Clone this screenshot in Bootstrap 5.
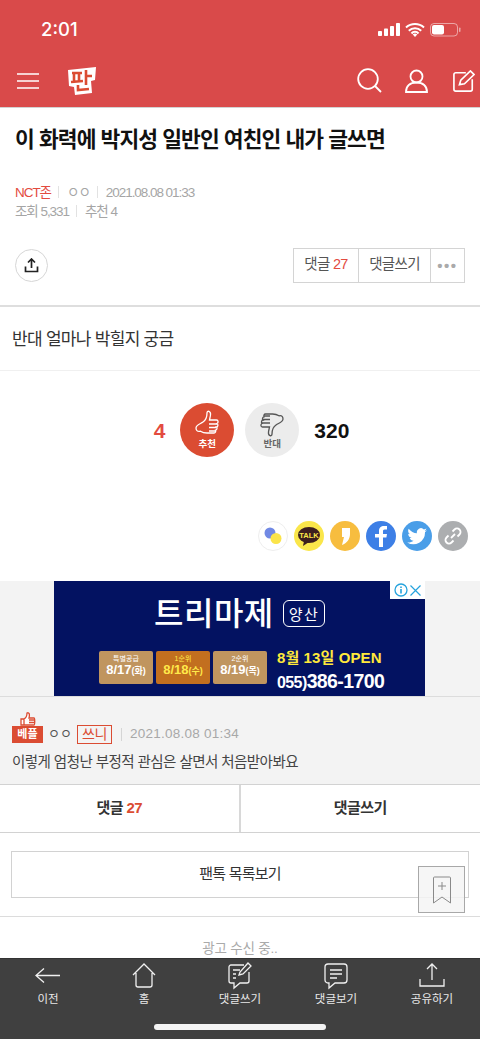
<!doctype html>
<html lang="ko"><head><meta charset="utf-8"><meta name="viewport" content="width=device-width,initial-scale=1">
<link rel="stylesheet" href="https://cdn.jsdelivr.net/npm/bootstrap@5.3.0/dist/css/bootstrap.min.css">
<style>
html,body{height:1039px;overflow:hidden}
body{font-family:"Liberation Sans","Noto Sans CJK KR",sans-serif;background:#fff;color:#222;position:relative;width:480px}
.topbar{background:#d94a4a;height:107px;border-bottom:0;color:#fff}
.statusrow{height:59px;padding:0 18px 0 41px}
.clock{font-size:18.5px;font-family:Inter,"Liberation Sans",sans-serif;font-weight:500;line-height:1;margin-top:-1px}
.navrow{height:48px;padding:0 5px 5px 17px}
.sep{height:1px;background:#d2d2d2}
.ttl{font-size:21.5px;font-weight:700;letter-spacing:-.92px;line-height:30px;margin:0;padding:17px 15px 0;color:#111;white-space:nowrap}
.meta{font-size:13.5px;letter-spacing:-1.05px;color:#a5a5a5;padding:0 15px;line-height:19px;white-space:nowrap}
.meta1{margin-top:28px}
.meta .tick{display:inline-block;width:1px;height:12px;background:#e2e2e2;margin:0 8px 0 7px;vertical-align:-1px}
.redt{color:#e34b3f}
.actrow{padding:0 15px;margin-top:27px;height:34px}
.upcirc{width:33px;height:33px;border:1px solid #d6d6d6;border-radius:50%}
.btngrp{border:1px solid #d4d4d4;height:35px;font-size:14.5px;letter-spacing:-.7px;color:#555}
.btngrp>div{border-right:1px solid #d4d4d4;height:100%}
.btngrp>div:last-child{border-right:0}
.g1{width:65px}.g2{width:72px}.g3{width:33px}
.dots{color:#aaa;letter-spacing:1.5px;font-size:15px;font-weight:700;padding-top:3px}
.bodytxt{font-size:17px;letter-spacing:-.7px;color:#333;padding:21px 12px 0;line-height:24px;height:66px;border-top:2px solid #dedede;margin-top:23px;border-bottom:1px solid #f0f0f0}
.votes{margin-top:31px;height:55px;padding-left:23px}
.vn{font-size:21px;font-weight:700;margin-top:3px}
.vcirc{width:54px;height:54px;border-radius:50%;font-size:9.5px;font-weight:700;line-height:1}
.up{background:#db4c32;color:#fff}.dn{background:#ececec;color:#666}
.sharerow{margin-top:64px;height:30px;padding-right:12px;gap:6px}
.sc{width:30px;height:30px;border-radius:50%}
.grayband{background:#f3f3f3;margin-top:30px;height:204px;border-bottom:1px solid #d2d2d2}
.adbox{width:371px;height:115px;background:#031261;margin-left:54px;position:relative;color:#fff;overflow:hidden}
.adx{position:absolute;right:0;top:0;width:35px;height:18px;background:#fff}
.adtitle{font-size:32px;font-weight:500;letter-spacing:.5px;line-height:40px;padding-top:10px;padding-left:100px;white-space:nowrap;font-family:"Noto Sans CJK KR",sans-serif}
.adtag{font-size:15px;border:1px solid #fff;border-radius:6px;padding:2px 5px;line-height:16px;letter-spacing:1.500px;font-weight:400;margin-left:9px;vertical-align:5px}
.adrow{position:absolute;left:45px;top:70px;gap:3px}
.adb{width:54px;height:33px;background:#c0955f;border-radius:2px;font-size:13px;font-weight:700;line-height:13px}
.adb small{display:block;font-size:7px;line-height:9px;padding-top:3px;font-weight:400}
.adb.hot{background:#c26f1f;color:#ffe94a}
.adright{position:absolute;left:223px;top:69px;white-space:nowrap}
.adr1{color:#ffe93b;font-size:15px;font-weight:700;line-height:16px;letter-spacing:.1px}
.adr2{font-size:19.500px;font-weight:700;line-height:22px;margin-top:4px;letter-spacing:-.6px}
.adr2 span{font-size:16px}
.cmt{padding:28px 12px 0;height:88px;border-top:1px solid #dcdcdc}
.beple{background:#db4c32;color:#fff;font-size:11px;font-weight:700;width:31px;height:17px;line-height:17px;position:relative;text-align:center}
.thumbmini{position:absolute;left:8px;top:-14px}
.cmeta{font-size:13.5px;color:#a8a8a8;height:18px;letter-spacing:.25px}
.who{color:#555;font-size:13px;margin:0 5px;letter-spacing:0}
.ssni{border:1px solid #db4c32;color:#db4c32;font-size:14px;width:35px;height:19px;line-height:17px;text-align:center;margin-right:9px;letter-spacing:-.5px}
.cticks{width:1px;height:13px;background:#d5d5d5;margin-right:8px}
.ctext{font-size:14.5px;letter-spacing:-.55px;color:#444;line-height:22px;margin-top:8px;white-space:nowrap}
.twobtn{height:48px;border-bottom:1px solid #d2d2d2;font-size:15px;font-weight:700;letter-spacing:-.6px;color:#333}
.twobtn>div{width:50%}
.twobtn>div:first-child{border-right:2px solid #d8d8d8;width:241px}
.listbtn{margin:18px 11px 0;height:47px;border:1px solid #d2d2d2;font-size:15px;letter-spacing:-.8px;color:#333}
.hr2{height:1px;background:#dcdcdc;margin-top:18px}
.adwait{font-size:13.5px;color:#aaa;text-align:center;line-height:18px;margin-top:23px;letter-spacing:-.2px}
.floatbm{position:absolute;left:418px;top:866px;width:47px;height:47px;background:rgba(245,245,245,.85);border:1px solid #a8a8a8}
.dock{position:absolute;left:0;right:0;top:958px;height:81px;background:#404040;color:#e8e8e8;font-size:11.5px;border-top:1px solid #333}
.dockit{width:96px;height:49px;padding-top:2px}
.dockit svg{height:29px;display:block}
.dockit span{line-height:13px;margin-top:3px}
.homebar{position:absolute;left:154px;top:65px;width:172px;height:6px;background:#f4f4f4;border-radius:3px}
</style></head><body>

<header class="topbar">
 <div class="statusrow d-flex align-items-center justify-content-between">
  <span class="clock">2:01</span>
  <svg width="84" height="16" viewBox="0 0 84 16" fill="#fff">
   <rect x="0" y="9" width="4" height="5" rx=".8"/><rect x="6" y="6.500" width="4" height="7.500" rx=".8"/><rect x="12" y="4" width="4" height="10" rx=".8"/><rect x="18" y="1" width="4" height="13" rx=".8"/>
   <path d="M28 5.500a13.500 13.500 0 0 1 18 0M30.800 8.700a9 9 0 0 1 12.400 0M33.500 11.500a4.500 4.500 0 0 1 7 0" fill="none" stroke="#fff" stroke-width="2"/><path d="M37 15l-2.300-2.400a3.200 3.200 0 0 1 4.600 0z"/>
   <rect x="52.500" y="1.500" width="27" height="12.500" rx="3.500" fill="none" stroke="#fff" stroke-opacity=".5"/><rect x="54" y="3" width="12" height="9.500" rx="2"/><rect x="81" y="5.500" width="1.500" height="4.500" rx=".7" fill-opacity=".5"/>
  </svg>
 </div>
 <div class="navrow d-flex align-items-center">
  <svg width="23" height="16" viewBox="0 0 23 16" stroke="#fff" stroke-width="1.700"><path d="M0 1h22M0 8h22M0 15h22"/></svg>
  <svg class="logo-p" style="margin-left:27px" width="31" height="30" viewBox="0 0 31 30"><path d="M1 4L29 1l-1 13-4 1 1 12-17 2-1-8-5-1z" fill="#fff"/><path d="M5 7h10M7 7v8M12 7v8M4 16l12-1M19 4v15M19 10h6M11 19v5l11-1" stroke="#db4c32" stroke-width="2.600" fill="none"/></svg>
  <div class="ms-auto d-flex align-items-center">
   <svg style="margin-right:23px" width="25" height="25" viewBox="0 0 25 25" fill="none" stroke="#fff" stroke-width="1.800"><circle cx="11" cy="11" r="9.800"/><path d="M18 18l6 6"/></svg>
   <svg style="margin-right:25px" width="23" height="24" viewBox="0 0 23 24" fill="none" stroke="#fff" stroke-width="1.800"><circle cx="11.500" cy="7.500" r="6"/><path d="M1 23c0-6 4-9.500 10.500-9.500S22 17 22 23z"/></svg>
   <svg width="22" height="22" viewBox="0 0 24 24" fill="none" stroke="#fff" stroke-width="1.800"><path d="M14 3H3a2 2 0 0 0-2 2v16a2 2 0 0 0 2 2h16a2 2 0 0 0 2-2V10"/><path d="M7 16l1.500-5L19 1l4 4-10.500 10z"/></svg>
  </div>
 </div>
</header>
<div class="sep"></div>

<h1 class="ttl">이 화력에 박지성 일반인 여친인 내가 글쓰면</h1>
<div class="meta meta1"><span class="redt">NCT존</span><i class="tick"></i><span style="letter-spacing:-1px">ㅇㅇ</span><i class="tick"></i>2021.08.08 01:33</div>
<div class="meta">조회 5,331<i class="tick"></i>추천 4</div>

<div class="actrow d-flex justify-content-between align-items-center">
 <div class="upcirc d-flex align-items-center justify-content-center">
  <svg width="15" height="15" viewBox="0 0 15 15" fill="none" stroke="#222" stroke-width="1.700"><path d="M7.500 10V1.500M4 4.500L7.500 1 11 4.500M1.500 8.500V13.500H13.500V8.500"/></svg>
 </div>
 <div class="btngrp d-flex">
  <div class="g1 d-flex align-items-center justify-content-center"><span>댓글 <span class="redt">27</span></span></div>
  <div class="g2 d-flex align-items-center justify-content-center">댓글쓰기</div>
  <div class="g3 d-flex align-items-center justify-content-center dots">•••</div>
 </div>
</div>

<div class="bodytxt">반대 얼마나 박힐지 궁금</div>

<div class="votes d-flex align-items-center justify-content-center">
 <span class="vn redt" style="margin-right:15px">4</span>
 <div class="vcirc up d-flex flex-column align-items-center justify-content-center">
  <svg width="24" height="27" viewBox="0 0 24 27" fill="none" stroke="#fff" stroke-width="1.300"><path d="M8 12c3-2 4-5 4-9 0-3 4-2 3.500 2-.2 2-.8 3.500-1 5h7c2 0 2 3 .5 3.500 1.500 1 1 3.500-.5 3.500 1 1 .5 3-1 3.200.5 1 0 2.800-1.500 2.800h-7c-3 0-5-.8-6.500-1.800C2 22 1 20 1 18c0-3 4-4 7-6z"/><path d="M14 14h8M14 17.500h7M14 21h6"/></svg>
  <span style="margin-top:2px">추천</span>
 </div>
 <div class="vcirc dn d-flex flex-column align-items-center justify-content-center" style="margin-left:11px">
  <svg width="24" height="27" viewBox="0 0 24 27" fill="none" stroke="#555" stroke-width="1.300"><path d="M16 15c-3 2-4 5-4 9 0 3-4 2-3.500-2 .2-2 .8-3.500 1-5h-7c-2 0-2-3-.5-3.500C1 12.500 1.500 10 3 10c-1-1-.5-3 1-3.200C3.500 5.800 4 4 5.500 4h7c3 0 5 .8 6.500 1.800C22 5 23 7 23 9c0 3-4 4-7 6z"/><path d="M10 13H2M10 9.500H3M10 6H4"/></svg>
  <span style="margin-top:2px">반대</span>
 </div>
 <span class="vn" style="margin-left:15px;color:#111">320</span>
</div>

<div class="sharerow d-flex justify-content-end">
 <div class="sc d-flex align-items-center justify-content-center" style="background:#fff;border:1px solid #eee"><svg width="22" height="22" viewBox="0 0 22 22"><circle cx="8" cy="8" r="5.500" fill="#7189e4"/><circle cx="14" cy="13.500" r="5.500" fill="#fbe44a"/></svg></div>
 <div class="sc d-flex align-items-center justify-content-center" style="background:#fae64a"><svg width="24" height="20" viewBox="0 0 24 20"><ellipse cx="12" cy="9" rx="11" ry="8" fill="#3c1e1e"/><path d="M7 15l-1 5 6-4z" fill="#3c1e1e"/><text x="12" y="12" text-anchor="middle" font-size="7.500" font-weight="700" fill="#fae64a" font-family="Liberation Sans">TALK</text></svg></div>
 <div class="sc d-flex align-items-center justify-content-center" style="background:#f7bd3f"><svg width="14" height="22" viewBox="0 0 14 22" fill="#fff"><path d="M4 3h8v6c0 5-3 9-8 11l2-8H4z"/></svg></div>
 <div class="sc d-flex align-items-center justify-content-center" style="background:#3d7fe6"><svg width="14" height="22" viewBox="0 0 14 22" fill="#fff"><path d="M5 22V12.500H1V9h4V6c0-3.500 2-5 5-5h3v3.500h-2.200C9.300 4.500 9 5.300 9 6.500V9h4l-.6 3.500H9V22z"/></svg></div>
 <div class="sc d-flex align-items-center justify-content-center" style="background:#4a9ee8"><svg width="20" height="17" viewBox="0 0 20 17" fill="#fff"><path d="M20 2.200c-.7.300-1.500.5-2.300.6.800-.5 1.500-1.300 1.800-2.200-.8.500-1.700.800-2.600 1A4 4 0 0 0 10 5.300C6.700 5.200 3.700 3.600 1.700.8.600 2.700 1.200 5 3 6.200c-.7 0-1.300-.2-1.800-.5 0 2 1.400 3.700 3.300 4.100-.6.200-1.200.2-1.800.1.500 1.600 2 2.700 3.800 2.800C4.800 14 2.500 14.700.2 14.400A11.600 11.600 0 0 0 18 4.100c.8-.5 1.500-1.200 2-1.900z"/></svg></div>
 <div class="sc d-flex align-items-center justify-content-center" style="background:#acaeb0"><svg width="20" height="20" viewBox="0 0 20 20" fill="none" stroke="#fff" stroke-width="1.800"><path d="M8 12l4-4"/><path d="M9.500 5.500l2-2a3.500 3.500 0 0 1 5 5l-2 2M10.500 14.500l-2 2a3.500 3.500 0 0 1-5-5l2-2"/></svg></div>
</div>

<section class="grayband">
 <div class="adbox">
  <div class="adtitle">트리마제<span class="adtag">양산</span></div>
  <div class="adrow d-flex text-center">
   <div class="adb"><small>특별공급</small>8/17<span style="font-size:9px">(화)</span></div>
   <div class="adb hot"><small>1순위</small>8/18<span style="font-size:9px">(수)</span></div>
   <div class="adb"><small>2순위</small>8/19<span style="font-size:9px">(목)</span></div>
  </div>
  <div class="adright"><div class="adr1">8월 13일 OPEN</div><div class="adr2"><span>055)</span>386-1700</div></div>
  <div class="adx d-flex align-items-center justify-content-between px-1">
   <svg width="14" height="14" viewBox="0 0 14 14"><circle cx="7" cy="7" r="6" fill="none" stroke="#26a3dd" stroke-width="1.300"/><path d="M7 6v4.500M7 3.500v1.500" stroke="#26a3dd" stroke-width="1.600"/></svg>
   <svg width="11" height="11" viewBox="0 0 11 11" stroke="#26a3dd" stroke-width="1.200"><path d="M.5.500l10 10M10.500.500l-10 10"/></svg>
  </div>
 </div>
 <div class="cmt">
  <div class="d-flex align-items-center cmeta">
   <span class="beple">베플<svg class="thumbmini" width="16" height="14" viewBox="0 0 16 14" fill="#fff" stroke="#db4c32" stroke-width="1.300"><path d="M1 7h3v6H1zM4 7c2-1 3-3 3-6 2-1 3 1 2 5h5c1 0 1 7 0 7H4z"/><path d="M9 8h5M9 10.500h5"/></svg></span>
   <span class="who">ㅇㅇ</span><span class="ssni">쓰니</span><span class="cticks"></span><span>2021.08.08 01:34</span>
  </div>
  <div class="ctext">이렇게 엄청난 부정적 관심은 살면서 처음받아봐요</div>
 </div>
</section>

<div class="twobtn d-flex">
 <div class="d-flex align-items-center justify-content-center"><span>댓글 <span style="color:#db4c32">27</span></span></div>
 <div class="d-flex align-items-center justify-content-center">댓글쓰기</div>
</div>
<div class="listbtn d-flex align-items-center justify-content-center">팬톡 목록보기</div>
<div class="hr2"></div>
<div class="adwait">광고 수신 중..</div>

<div class="floatbm d-flex align-items-center justify-content-center">
 <svg width="20" height="28" viewBox="0 0 20 28" fill="none" stroke="#8a8a8a" stroke-width="1"><path d="M1.500 27V2a1 1 0 0 1 1-1h15a1 1 0 0 1 1 1v25L10 21z"/><path d="M10 6v8M6 10h8"/></svg>
</div>

<nav class="dock">
 <div class="d-flex">
  <div class="dockit d-flex flex-column align-items-center"><svg width="26" height="29" viewBox="0 0 26 29" fill="none" stroke="#f0f0f0" stroke-width="1.300"><path d="M25 14.500H1M9 7.500l-8 7 8 7"/></svg><span>이전</span></div>
  <div class="dockit d-flex flex-column align-items-center"><svg width="24" height="29" viewBox="0 0 24 29" fill="none" stroke="#f0f0f0" stroke-width="1.300"><path d="M1 14L12 3l11 11M4 12v12a2 2 0 0 0 2 2h12a2 2 0 0 0 2-2V12"/></svg><span>홈</span></div>
  <div class="dockit d-flex flex-column align-items-center"><svg width="26" height="29" viewBox="0 0 26 29" fill="none" stroke="#f0f0f0" stroke-width="1.300"><path d="M17 4H4a2 2 0 0 0-2 2v14a2 2 0 0 0 2 2h3v5l6-5h7a2 2 0 0 0 2-2V11"/><path d="M12 14l1-3L21 2l3 3-8 8z"/><path d="M6 9h7M6 13h3M6 17h3"/></svg><span>댓글쓰기</span></div>
  <div class="dockit d-flex flex-column align-items-center"><svg width="24" height="29" viewBox="0 0 24 29" fill="none" stroke="#f0f0f0" stroke-width="1.300"><path d="M4 3h16a3 3 0 0 1 3 3v13a3 3 0 0 1-3 3h-9l-6 5v-5H4a3 3 0 0 1-3-3V6a3 3 0 0 1 3-3z"/><path d="M6 9h12M6 13h12M6 17h7"/></svg><span>댓글보기</span></div>
  <div class="dockit d-flex flex-column align-items-center"><svg width="26" height="29" viewBox="0 0 26 29" fill="none" stroke="#f0f0f0" stroke-width="1.300"><path d="M13 19V3M8 8l5-5 5 5M1 18v7h24v-7"/></svg><span>공유하기</span></div>
 </div>
 <div class="homebar"></div>
</nav>
</body></html>
